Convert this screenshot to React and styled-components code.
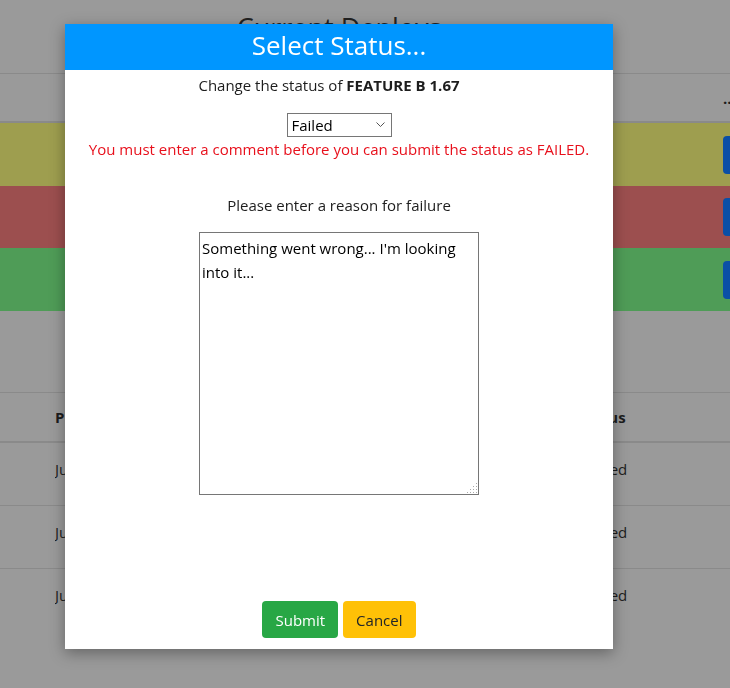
import React from "react";
import styled, { createGlobalStyle } from "styled-components";

const Global = createGlobalStyle`
  html, body { margin: 0; padding: 0; }
  body {
    background: #9a9a9a;
    font-family: "Open Sans", "Noto Sans", "Liberation Sans", sans-serif;
    color: #1d1d1d;
    overflow: hidden;
    width: 730px;
    height: 688px;
  }
`;

const Page = styled.div`
  width: 730px;
  height: 688px;
  background: #9a9a9a;
  display: flex;
  flex-direction: column;
`;

const PageTitle = styled.h1`
  margin: 0;
  height: 74px;
  box-sizing: border-box;
  padding: 9px 52px 0 0;
  text-align: center;
  font-size: 27px;
  font-weight: 400;
  color: #222;
  border-bottom: 1px solid #8a8a8a;
`;

const Table = styled.div`
  display: flex;
  flex-direction: column;
  border-top: ${(p) => (p.$top ? "1px solid #8a8a8a" : "none")};
`;

const HeadRow = styled.div`
  height: ${(p) => p.$h}px;
  display: grid;
  grid-template-columns: ${(p) => p.$cols};
  align-items: center;
  border-bottom: 2px solid #8a8a8a;
  box-sizing: border-box;
  font-weight: 700;
  font-size: 15px;
`;

const StatusRow = styled.div`
  height: ${(p) => p.$h}px;
  display: grid;
  grid-template-columns: ${(p) => p.$cols};
  align-items: ${(p) => (p.$top ? "start" : "center")};
  padding-top: ${(p) => (p.$top ? 15 : 0)}px;
  background: ${(p) => p.$bg || "transparent"};
  border-bottom: ${(p) => (p.$line ? "1px solid #8a8a8a" : "none")};
  box-sizing: border-box;
  font-size: 15px;
  line-height: 22px;
`;

const Cell = styled.div`
  padding-left: ${(p) => p.$pl || 0}px;
  white-space: nowrap;
  overflow: hidden;
`;

const RowButton = styled.div`
  margin-left: 41px;
  width: 40px;
  height: 38px;
  border-radius: 4px;
  background: #0a4fa6;
`;

const Spacer = styled.div`
  height: ${(p) => p.$h}px;
`;

const Overlay = styled.div`
  position: fixed;
  inset: 0;
  display: flex;
  justify-content: flex-start;
  align-items: flex-start;
  padding: 24px 0 0 65px;
`;

const Modal = styled.div`
  width: 548px;
  height: 625px;
  background: #fff;
  box-shadow: 0 4px 14px rgba(0, 0, 0, 0.35);
  display: flex;
  flex-direction: column;
  align-items: center;
`;

const ModalHeader = styled.div`
  width: 100%;
  height: 46px;
  background: #0096ff;
  color: #fff;
  font-size: 26px;
  display: flex;
  align-items: center;
  justify-content: center;
  padding-bottom: 4px;
  box-sizing: border-box;
`;

const Line = styled.div`
  font-size: 15px;
  color: ${(p) => p.$color || "#1d1d1d"};
  margin-top: ${(p) => p.$mt || 0}px;
  padding-right: ${(p) => p.$pr || 0}px;
  line-height: 22px;
  text-align: center;
`;

const Select = styled.div`
  margin-top: ${(p) => p.$mt}px;
  width: 105px;
  height: 24px;
  box-sizing: border-box;
  border: 1px solid #767676;
  display: flex;
  align-items: center;
  justify-content: space-between;
  padding: 0 6px 0 4px;
  font-size: 15px;
  color: #000;
`;

const TextArea = styled.textarea`
  margin-top: ${(p) => p.$mt}px;
  width: 280px;
  height: 263px;
  box-sizing: border-box;
  border: 1px solid #767676;
  padding: 3px 2px 1px;
  font-family: "Open Sans", "Noto Sans", sans-serif;
  font-size: 15px;
  line-height: 24px;
  color: #000;
  resize: both;
  outline: none;
  &::-webkit-resizer {
    background:
      linear-gradient(135deg, #fff 55%, transparent 55%),
      radial-gradient(circle, #aaa 0.8px, transparent 1px) 0 0 / 3px 3px;
  }
`;

const Footer = styled.div`
  margin-top: auto;
  margin-bottom: 11px;
  display: flex;
  gap: 5px;
`;

const Button = styled.button`
  height: 37px;
  padding: 0 13px;
  border: none;
  border-radius: 4px;
  font-family: "Open Sans", "Noto Sans", sans-serif;
  font-size: 15px;
  background: ${(p) => p.$bg};
  color: ${(p) => p.$fg};
`;

const cols1 = "1fr 48px";
const cols2 = "55px 1fr 152px";

export default function App() {
  return (
    <>
      <Global />
      <Page>
        <PageTitle>Current Deploys</PageTitle>
        <Table>
          <HeadRow $h={49} $cols={cols1}>
            <Cell />
            <Cell $pl={41}>...</Cell>
          </HeadRow>
          <StatusRow $h={63} $cols={cols1} $bg="#9e9e4f">
            <Cell />
            <Cell>
              <RowButton />
            </Cell>
          </StatusRow>
          <StatusRow $h={62} $cols={cols1} $bg="#9c4f4f">
            <Cell />
            <Cell>
              <RowButton />
            </Cell>
          </StatusRow>
          <StatusRow $h={63} $cols={cols1} $bg="#4f9c57">
            <Cell />
            <Cell>
              <RowButton />
            </Cell>
          </StatusRow>
        </Table>
        <Spacer $h={81} />
        <Table $top>
          <HeadRow $h={50} $cols={cols2}>
            <Cell />
            <Cell>Project</Cell>
            <Cell>Status</Cell>
          </HeadRow>
          <StatusRow $h={63} $cols={cols2} $line $top>
            <Cell />
            <Cell>Jun 12</Cell>
            <Cell>Passed</Cell>
          </StatusRow>
          <StatusRow $h={63} $cols={cols2} $line $top>
            <Cell />
            <Cell>Jun 10</Cell>
            <Cell>Passed</Cell>
          </StatusRow>
          <StatusRow $h={63} $cols={cols2} $top>
            <Cell />
            <Cell>Jun 08</Cell>
            <Cell>Passed</Cell>
          </StatusRow>
        </Table>
      </Page>
      <Overlay>
        <Modal>
          <ModalHeader>Select Status...</ModalHeader>
          <Line $mt={4} $pr={20}>
            Change the status of <b>FEATURE B 1.67</b>
          </Line>
          <Select $mt={17}>
            <span>Failed</span>
            <svg width="9" height="6" viewBox="0 0 9 6">
              <path d="M0.5 0.5 L4.5 4.5 L8.5 0.5" fill="none" stroke="#555" strokeWidth="1" />
            </svg>
          </Select>
          <Line $color="#e8101c" $mt={1}>
            You must enter a comment before you can submit the status as FAILED.
          </Line>
          <Line $mt={34}>Please enter a reason for failure</Line>
          <TextArea
            $mt={16}
            defaultValue="Something went wrong... I'm looking into it..."
          />
          <Footer>
            <Button $bg="#28a745" $fg="#fff">Submit</Button>
            <Button $bg="#ffc107" $fg="#212529">Cancel</Button>
          </Footer>
        </Modal>
      </Overlay>
    </>
  );
}
